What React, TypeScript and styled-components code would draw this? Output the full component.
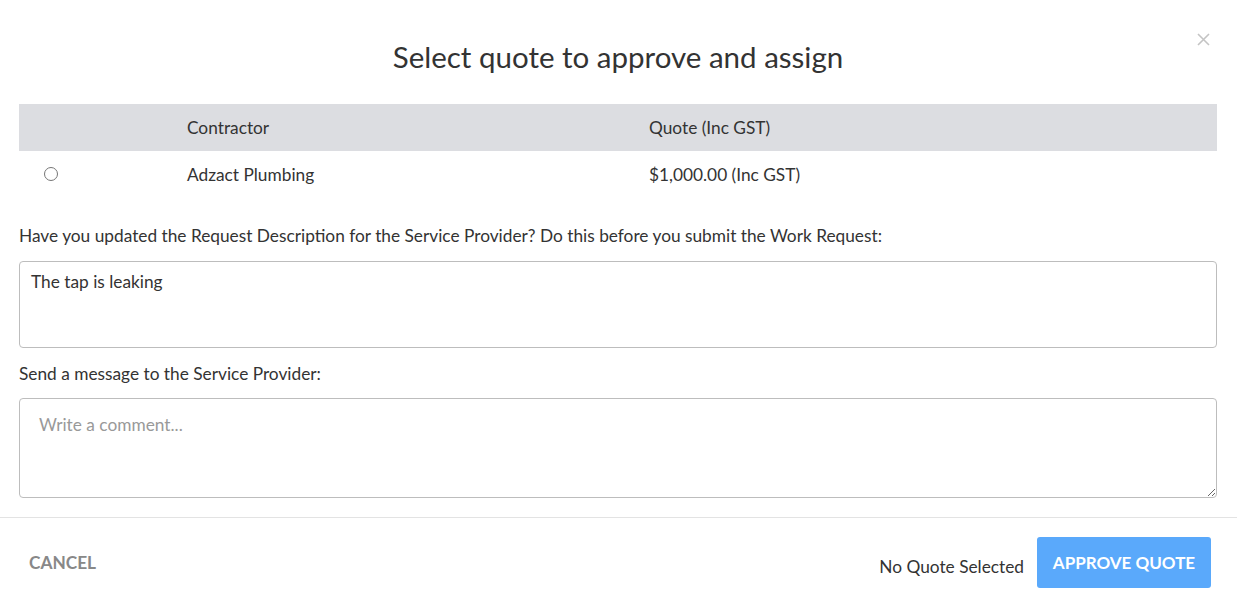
import React from "react";
import styled, { createGlobalStyle } from "styled-components";

const GlobalStyle = createGlobalStyle`
  html, body { margin: 0; padding: 0; background: #fff; }
  body { font-family: Lato, "Open Sans", sans-serif; color: #333; }
  * { box-sizing: border-box; }
`;

const Modal = styled.div`
  width: 1237px;
  height: 608px;
  display: flex;
  flex-direction: column;
  background: #fff;
  position: relative;
`;

const Body = styled.div`
  padding: 0 20px 0 19px;
  flex: 1;
  display: flex;
  flex-direction: column;
`;

const Title = styled.h1`
  margin: 0;
  height: 104px;
  display: flex;
  align-items: center;
  justify-content: center;
  padding-top: 8px;
  font-size: 29.5px;
  font-weight: 400;
  color: #333;
`;

const Close = styled.button`
  position: absolute;
  top: 31px;
  right: 26px;
  width: 16px;
  height: 16px;
  border: 0;
  padding: 0;
  background: none;
  cursor: pointer;
  display: flex;
  align-items: center;
  justify-content: center;
`;

const Table = styled.div`
  display: grid;
  grid-template-columns: 168px 462px 1fr;
`;

const HeadCell = styled.div`
  height: 47px;
  background: #dcdde1;
  display: flex;
  align-items: center;
  font-size: 17.3px;
  color: #333;
`;

const Cell = styled.div<{ $center?: boolean }>`
  height: 47px;
  display: flex;
  align-items: center;
  font-size: 17.3px;
  color: #333;
  padding-left: ${(p) => (p.$center ? "25px" : "0")};
`;

const Radio = styled.span`
  width: 14px;
  height: 14px;
  border: 1px solid #767676;
  border-radius: 50%;
  display: inline-block;
  margin-top: -1px;
`;

const Label = styled.div<{ $top: number }>`
  margin-top: ${(p) => p.$top}px;
  font-size: 17.3px;
  line-height: 20px;
  color: #333;
`;

const Area = styled.textarea<{ $h: number; $mt: number; $padTop: number; $pad: number }>`
  margin-top: ${(p) => p.$mt}px;
  width: 100%;
  height: ${(p) => p.$h}px;
  border: 1px solid #bdbdbd;
  border-radius: 4px;
  padding: ${(p) => p.$padTop}px ${(p) => p.$pad}px 10px;
  font-family: Lato, sans-serif;
  font-size: 17.3px;
  line-height: 20px;
  color: #333;
  resize: ${(p) => (p.$h > 90 ? "vertical" : "none")};
  outline: none;
  &::placeholder { color: #999; }
`;

const Footer = styled.div`
  margin-top: 19px;
  border-top: 1px solid #e3e3e3;
  padding: 19px 26px 20px 29px;
  display: flex;
  align-items: center;
`;

const Cancel = styled.button`
  border: 0;
  background: none;
  padding: 0;
  font-family: Lato, sans-serif;
  font-weight: 700;
  font-size: 17.3px;
  color: #888;
  cursor: pointer;
`;

const Spacer = styled.div`
  flex: 1;
`;

const Status = styled.span`
  font-size: 17.3px;
  color: #333;
  margin-right: 13px;
  margin-top: 8px;
`;

const Approve = styled.button`
  width: 174px;
  height: 51px;
  border: 0;
  border-radius: 3px;
  background: #5aa9fb;
  color: #fff;
  font-family: Lato, sans-serif;
  font-weight: 700;
  font-size: 17px;
  cursor: pointer;
  padding-bottom: 2px;
`;

export default function App() {
  return (
    <>
      <GlobalStyle />
      <Modal>
        <Close aria-label="close">
          <svg width="13" height="13" viewBox="0 0 13 13">
            <path d="M1 1L12 12M12 1L1 12" stroke="#c4c4c4" strokeWidth="1.6" />
          </svg>
        </Close>
        <Body>
          <Title>Select quote to approve and assign</Title>
          <Table>
            <HeadCell />
            <HeadCell>Contractor</HeadCell>
            <HeadCell>Quote (Inc GST)</HeadCell>
            <Cell $center>
              <Radio />
            </Cell>
            <Cell>Adzact Plumbing</Cell>
            <Cell>$1,000.00 (Inc GST)</Cell>
          </Table>
          <Label $top={28}>
            Have you updated the Request Description for the Service Provider? Do this before you submit the Work Request:
          </Label>
          <Area $h={87} $mt={15} $padTop={10} $pad={11} defaultValue="The tap is leaking" />
          <Label $top={16}>Send a message to the Service Provider:</Label>
          <Area $h={100} $mt={14} $padTop={16} $pad={19} placeholder="Write a comment..." />
        </Body>
        <Footer>
          <Cancel>CANCEL</Cancel>
          <Spacer />
          <Status>No Quote Selected</Status>
          <Approve>APPROVE QUOTE</Approve>
        </Footer>
      </Modal>
    </>
  );
}
